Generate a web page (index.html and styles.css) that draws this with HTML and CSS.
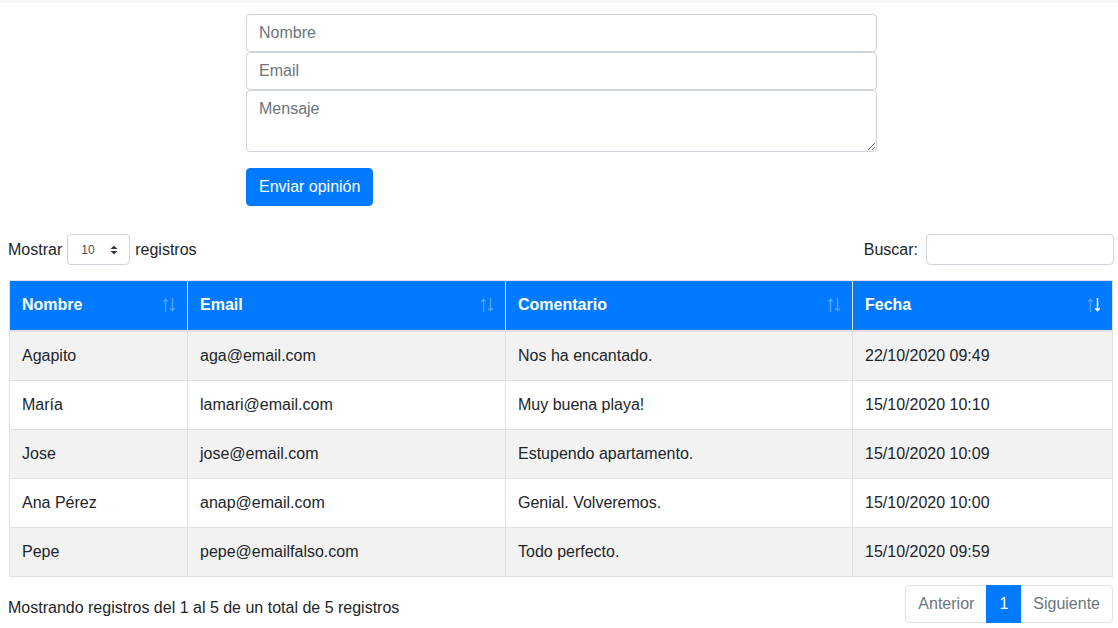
FILE: index.html
```html
<!DOCTYPE html>
<html lang="es">
<head>
<meta charset="utf-8">
<title>Opiniones</title>
<link rel="stylesheet" href="styles.css">
</head>
<body>
<div class="topline"></div>
<form class="form">
  <input class="field" type="text" placeholder="Nombre">
  <input class="field" type="text" placeholder="Email">
  <textarea class="field area" rows="2" placeholder="Mensaje"></textarea>
  <button type="button" class="btn">Enviar opinión</button>
</form>

<div class="wrapper">
  <div class="controls">
    <label class="length">Mostrar
      <span class="select">10<svg width="8" height="10" viewBox="0 0 8 10"><path d="M4 0.5 L7.5 4 H0.5 Z M4 9.5 L7.5 6 H0.5 Z" fill="#343a40"/></svg></span>
      registros</label>
    <label class="search">Buscar: <span class="search-input"></span></label>
  </div>

  <table class="table">
    <thead>
      <tr>
        <th class="c1">Nombre<svg class="sorticon" width="12" height="14" viewBox="0 0 12 14"><path class="up" d="M2.5 1.5 V14 M0.3 3.8 L2.5 1.3 L4.7 3.8"/><path class="dn" d="M9.5 0 V12.5 M7.3 10.2 L9.5 12.7 L11.7 10.2"/></svg></th>
        <th class="c2">Email<svg class="sorticon" width="12" height="14" viewBox="0 0 12 14"><path class="up" d="M2.5 1.5 V14 M0.3 3.8 L2.5 1.3 L4.7 3.8"/><path class="dn" d="M9.5 0 V12.5 M7.3 10.2 L9.5 12.7 L11.7 10.2"/></svg></th>
        <th class="c3">Comentario<svg class="sorticon" width="12" height="14" viewBox="0 0 12 14"><path class="up" d="M2.5 1.5 V14 M0.3 3.8 L2.5 1.3 L4.7 3.8"/><path class="dn" d="M9.5 0 V12.5 M7.3 10.2 L9.5 12.7 L11.7 10.2"/></svg></th>
        <th class="c4 desc">Fecha<svg class="sorticon" width="12" height="14" viewBox="0 0 12 14"><path class="up" d="M2.5 1.5 V14 M0.3 3.8 L2.5 1.3 L4.7 3.8"/><path class="dn" d="M9.5 0 V12.5 M7.3 10.2 L9.5 12.7 L11.7 10.2"/></svg></th>
      </tr>
    </thead>
    <tbody>
      <tr class="odd"><td>Agapito</td><td>aga@email.com</td><td>Nos ha encantado.</td><td>22/10/2020 09:49</td></tr>
      <tr><td>María</td><td>lamari@email.com</td><td>Muy buena playa!</td><td>15/10/2020 10:10</td></tr>
      <tr class="odd"><td>Jose</td><td>jose@email.com</td><td>Estupendo apartamento.</td><td>15/10/2020 10:09</td></tr>
      <tr><td>Ana Pérez</td><td>anap@email.com</td><td>Genial. Volveremos.</td><td>15/10/2020 10:00</td></tr>
      <tr class="odd"><td>Pepe</td><td>pepe@emailfalso.com</td><td>Todo perfecto.</td><td>15/10/2020 09:59</td></tr>
    </tbody>
  </table>

  <div class="footer">
    <div class="info">Mostrando registros del 1 al 5 de un total de 5 registros</div>
    <ul class="pagination">
      <li class="page disabled first">Anterior</li>
      <li class="page active">1</li>
      <li class="page disabled last">Siguiente</li>
    </ul>
  </div>
</div>
</body>
</html>
```

FILE: styles.css
```css
* { box-sizing: border-box; }
html, body { margin: 0; padding: 0; background: #fff; }
body {
  font-family: "Liberation Sans", Arial, sans-serif;
  font-size: 16px;
  line-height: 24px;
  color: #212529;
}
.topline { height: 3px; background: #f6f7f8; }
.form {
  width: 631px;
  margin: 11px 0 0 246px;
  display: flex;
  flex-direction: column;
  align-items: flex-start;
}
.field {
  display: block;
  width: 100%;
  height: 38px;
  padding: 6px 12px;
  font-family: inherit;
  font-size: 16px;
  line-height: 24px;
  color: #495057;
  border: 1px solid #ced4da;
  border-radius: 4px;
  background: #fff;
  margin: 0;
}
.field::placeholder { color: #6c757d; }
.area { height: 62px; resize: vertical; }
.btn {
  margin-top: 16px;
  height: 38px;
  padding: 6px 12px;
  font-family: inherit;
  font-size: 16px;
  line-height: 24px;
  color: #fff;
  background: #007bff;
  border: 1px solid #007bff;
  border-radius: 4px;
}
.wrapper { margin: 28px 4px 0 8px; }
.controls {
  display: flex;
  justify-content: space-between;
  align-items: center;
  height: 31px;
}
.length, .search { display: flex; align-items: center; gap: 5px; }
.select {
  width: 63px;
  height: 31px;
  border: 1px solid #ced4da;
  border-radius: 4px;
  font-size: 12px;
  color: #495057;
  padding-left: 13px;
  display: flex;
  align-items: center;
  justify-content: space-between;
  padding-right: 11px;
}
.search { gap: 8px; }
.search-input {
  width: 188px;
  height: 31px;
  border: 1px solid #ced4da;
  border-radius: 4px;
  display: block;
}
.table {
  margin: 15px 0 0 1px;
  width: 1103px;
  border-collapse: collapse;
  table-layout: fixed;
}
.table th, .table td {
  border: 1px solid #dee2e6;
  padding: 12px;
  text-align: left;
  vertical-align: top;
}
.table th {
  background: #007bff;
  color: #fff;
  font-weight: bold;
  border-bottom-width: 2px;
  position: relative;
  padding-right: 30px;
  height: 50px;
}
.c1 { width: 178px; }
.c2 { width: 318px; }
.c3 { width: 347px; }
.c4 { width: 260px; }
.sorticon {
  position: absolute;
  right: 12px;
  top: 17px;
  fill: none;
  stroke: #fff;
  stroke-width: 1.4;
}
.sorticon path { opacity: 0.3; }
.desc .sorticon .dn { opacity: 1; }
.table td { height: 49px; }
.odd td { background: #f2f2f2; }
.footer {
  display: flex;
  justify-content: space-between;
  align-items: flex-start;
  margin-top: 8px;
}
.info { padding-top: 11px; }
.pagination {
  list-style: none;
  margin: 0 1px 0 0;
  padding: 0;
  display: flex;
}
.page {
  height: 38px;
  padding: 6px 12px;
  border: 1px solid #dee2e6;
  margin-left: -1px;
  color: #6c757d;
  background: #fff;
}
.page.first { border-radius: 4px 0 0 4px; }
.page.last { border-radius: 0 4px 4px 0; }
.page.active { background: #007bff; border-color: #007bff; color: #fff; position: relative; }
```
